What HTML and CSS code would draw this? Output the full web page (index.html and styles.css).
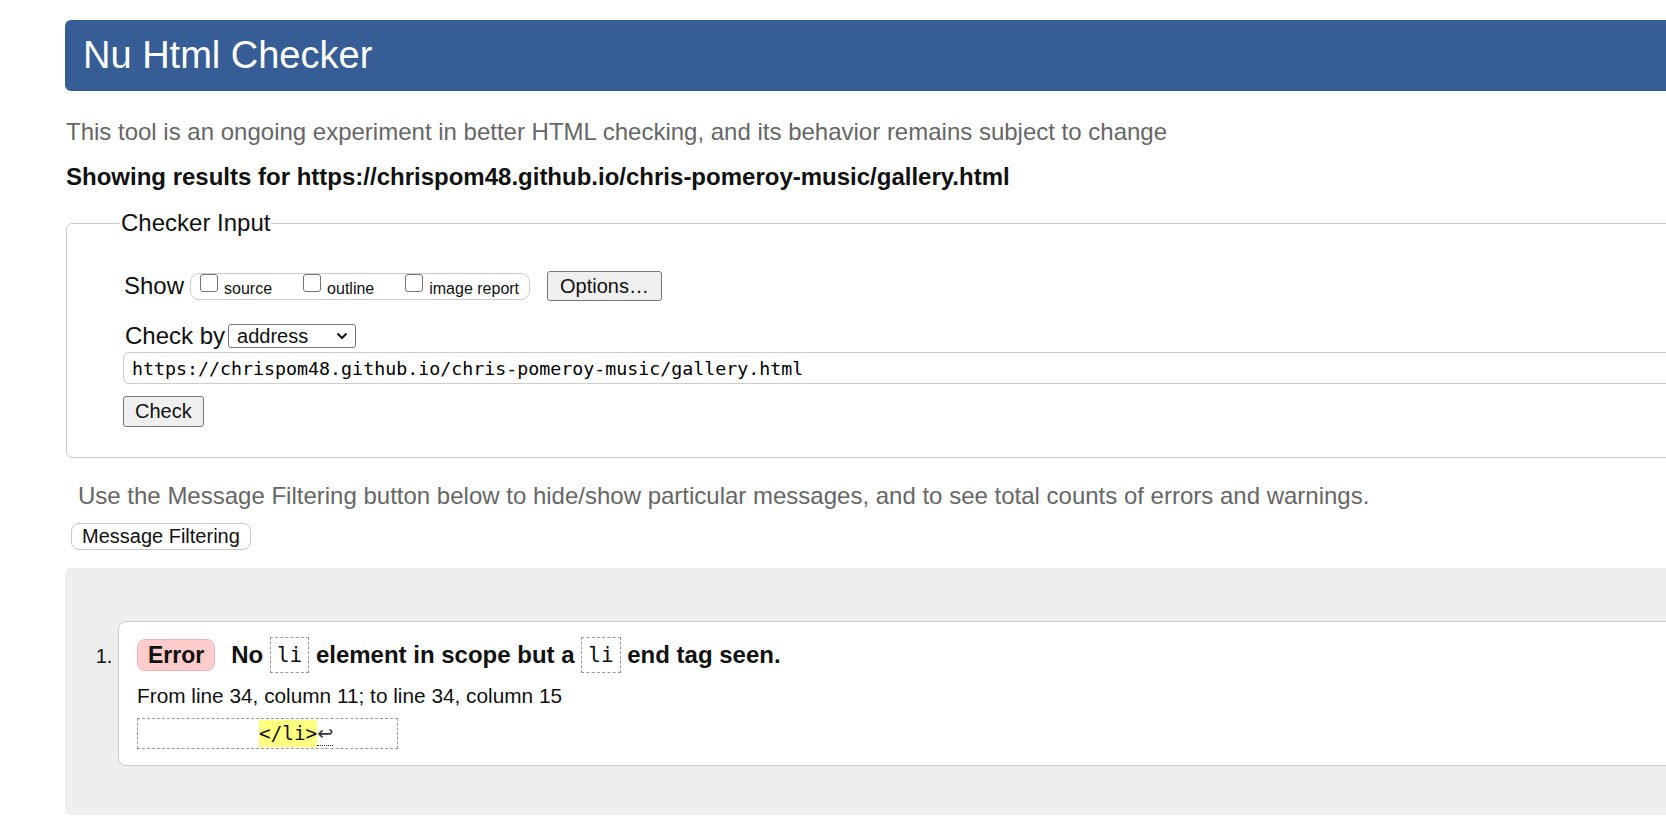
FILE: index.html
```html
<!DOCTYPE html>
<html lang="en">
<head>
<meta charset="utf-8">
<title>Showing results for https://chrispom48.github.io/chris-pomeroy-music/gallery.html - Nu Html Checker</title>
<link rel="stylesheet" href="styles.css">
</head>
<body>
<div class="page">
  <h1 class="masthead">Nu Html Checker</h1>
  <p class="intro">This tool is an ongoing experiment in better HTML checking, and its behavior remains subject to change</p>
  <p class="results">Showing results for https://chrispom48.github.io/chris-pomeroy-music/gallery.html</p>

  <fieldset class="checker">
    <legend class="checker-legend">Checker Input</legend>
    <div class="show-row">
      <span class="row-label">Show</span>
      <div class="show-group">
        <label class="opt opt-gap"><input type="checkbox" class="cb"><span class="opt-text">source</span></label>
        <label class="opt opt-gap"><input type="checkbox" class="cb"><span class="opt-text">outline</span></label>
        <label class="opt"><input type="checkbox" class="cb"><span class="opt-text">image report</span></label>
      </div>
      <button class="btn btn-options" type="button">Options…</button>
    </div>
    <div class="checkby-row">
      <span class="row-label">Check by</span>
      <span class="select-wrap">
        <select class="select"><option>address</option></select>
        <svg class="chev" width="12" height="8" viewBox="0 0 12 8"><path d="M1.5 1.5 L6 6 L10.5 1.5" fill="none" stroke="#111" stroke-width="2"/></svg>
      </span>
    </div>
    <input class="url" type="text" value="https://chrispom48.github.io/chris-pomeroy-music/gallery.html">
    <div class="check-row"><button class="btn btn-check" type="button">Check</button></div>
  </fieldset>

  <p class="filter-note">Use the Message Filtering button below to hide/show particular messages, and to see total counts of errors and warnings.</p>
  <div class="filter-row"><button class="btn-filter" type="button">Message Filtering</button></div>

  <div class="results-area">
    <ol class="messages">
      <li class="msg">
        <div class="msg-line">
          <span class="badge">Error</span>
          <span class="msg-text">No <code class="tag">li</code> element in scope but a <code class="tag">li</code> end tag seen.</span>
        </div>
        <p class="location">From line 34, column 11; to line 34, column 15</p>
        <div class="extract">          <b class="hl">&lt;/li&gt;</b><span class="lf">↩</span></div>
      </li>
    </ol>
  </div>
</div>
</body>
</html>
```
FILE: styles.css
```css
html { overflow: hidden; }
body {
  margin: 0;
  padding: 20px 0 0 65px;
  font-family: "Liberation Sans", Arial, sans-serif;
  color: #111;
  background: #fff;
}
.page { width: 1640px; }

.masthead {
  margin: 0;
  height: 71px;
  background: #365d95;
  border-radius: 6px;
  color: #fff;
  font-size: 38px;
  font-weight: normal;
  line-height: 71px;
  padding-left: 18px;
}
.intro {
  margin: 27px 0 0 1px;
  font-size: 24px;
  line-height: 28px;
  color: #666;
}
.results {
  margin: 17px 0 0 1px;
  font-size: 24px;
  line-height: 28px;
  font-weight: bold;
  color: #111;
}

.checker {
  margin: 18px 0 0 1px;
  border: 1px solid #ccc;
  border-radius: 6px;
  padding: 0 0 30px 56px;
}
.checker-legend {
  font-size: 24px;
  line-height: 28px;
  padding: 0 1px;
  margin-left: -3px;
  color: #111;
}
.row-label { font-size: 24px; line-height: 28px; color: #111; }

.show-row {
  display: flex;
  align-items: center;
  height: 32px;
  margin-top: 33px;
}
.show-row .row-label { margin: 0 6px 0 1px; }
.show-group {
  display: flex;
  align-items: flex-start;
  box-sizing: border-box;
  height: 27px;
  padding: 0 10px 0 9px;
  border: 1px solid #ccc;
  border-radius: 9px;
}
.opt { display: flex; align-items: flex-start; }
.opt-gap { margin-right: 31px; }
.cb {
  appearance: none;
  -webkit-appearance: none;
  box-sizing: border-box;
  width: 18px;
  height: 18px;
  margin: 0 6px 0 0;
  border: 1.5px solid #767676;
  border-radius: 3px;
  background: #fff;
}
.opt-text {
  font-size: 16px;
  line-height: 18px;
  margin-top: 6px;
  color: #111;
}
.btn {
  box-sizing: border-box;
  font-family: "Liberation Sans", Arial, sans-serif;
  font-size: 20px;
  color: #111;
  background: #efefef;
  border: 1px solid #767676;
  border-radius: 3px;
  padding: 0 12px;
  margin: 0;
}
.btn-options { height: 30px; margin-left: 17px; }

.checkby-row {
  display: flex;
  align-items: center;
  height: 28px;
  margin-top: 20px;
}
.checkby-row .row-label { margin: 0 3px 0 2px; }
.select-wrap { position: relative; display: inline-block; }
.select {
  appearance: none;
  -webkit-appearance: none;
  display: block;
  box-sizing: border-box;
  width: 128px;
  height: 24px;
  border: 1px solid #767676;
  border-radius: 3px;
  background: #fff;
  padding: 0 0 0 8px;
  font-family: "Liberation Sans", Arial, sans-serif;
  font-size: 20px;
  color: #111;
}
.chev { position: absolute; right: 8px; top: 8px; }

.url {
  display: block;
  box-sizing: border-box;
  width: 100%;
  height: 32px;
  margin: 2px 0 0 0;
  padding: 0 8px;
  border: 1px solid #ccc;
  border-radius: 6px;
  font-family: "DejaVu Sans Mono", "Liberation Mono", monospace;
  font-size: 18.3px;
  color: #000;
  background: #fff;
}
.check-row { display: flex; margin-top: 12px; }
.btn-check { height: 31px; padding: 0 11px; }

.filter-note {
  margin: 24px 0 0 13px;
  font-size: 24px;
  line-height: 28px;
  color: #666;
}
.filter-row { display: flex; margin: 13px 0 0 6px; }
.btn-filter {
  box-sizing: border-box;
  height: 27px;
  padding: 0 10px;
  font-family: "Liberation Sans", Arial, sans-serif;
  font-size: 20px;
  color: #111;
  background: #fff;
  border: 1px solid #c8c8c8;
  border-radius: 8px;
}

.results-area {
  margin-top: 18px;
  background: #eee;
  border-radius: 6px;
  padding: 53px 0 49px 53px;
}
.messages { margin: 0; padding: 0; list-style: decimal outside; }
.msg::marker { font-size: 20px; color: #111; }
.msg {
  background: #fff;
  border: 1px solid #ccc;
  border-radius: 8px;
  padding: 15px 18px 16px 18px;
}
.msg-line {
  display: flex;
  align-items: center;
  height: 36px;
}
.badge {
  box-sizing: border-box;
  height: 32px;
  line-height: 30px;
  padding: 0 10px;
  margin-right: 16px;
  background: #ffcccc;
  border: 1px solid #e8b8b8;
  border-radius: 8px;
  font-size: 23px;
  font-weight: bold;
  color: #111;
}
.msg-text {
  font-size: 24px;
  font-weight: bold;
  line-height: 36px;
  color: #111;
}
.tag {
  display: inline-block;
  vertical-align: top;
  box-sizing: border-box;
  height: 36px;
  line-height: 34px;
  padding: 0 6px;
  border: 1px dashed #999;
  font-family: "DejaVu Sans Mono", "Liberation Mono", monospace;
  font-size: 21px;
  font-weight: normal;
}
.location {
  margin: 11px 0 0 0;
  font-size: 20.8px;
  line-height: 24px;
  color: #111;
}
.extract {
  box-sizing: border-box;
  width: 261px;
  height: 31px;
  margin-top: 10px;
  padding: 0 5px;
  border: 1px dashed #999;
  white-space: pre;
  font-family: "DejaVu Sans Mono", "Liberation Mono", monospace;
  font-size: 19.3px;
  line-height: 29px;
  color: #111;
}
.hl {
  font-weight: normal;
  background: #ffff80;
  padding: 2px 0;
}
.lf {
  font-family: "DejaVu Sans", sans-serif;
  border-bottom: 1px dotted #333;
  color: #333;
}
```
